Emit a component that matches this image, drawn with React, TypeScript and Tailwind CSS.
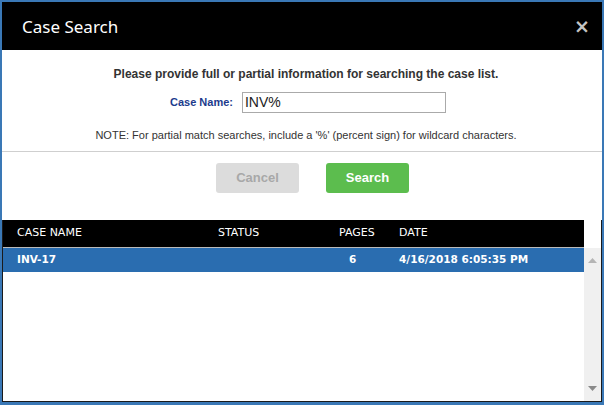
import React from "react";

const columns = [
  { label: "CASE NAME", w: "w-[201px]" },
  { label: "STATUS", w: "w-[121px]" },
  { label: "PAGES", w: "w-[60px]" },
  { label: "DATE", w: "flex-1" },
];

export default function App() {
  return (
    <div className="w-[604px] h-[405px] flex flex-col border-2 border-b-[3px] border-[#3a78b6] bg-white overflow-hidden">
      {/* Title bar */}
      <div className="h-[48px] shrink-0 bg-black flex items-center justify-between pl-[20px] pr-[12px]">
        <h1 className="text-white text-[17px] font-['Noto_Sans',sans-serif] leading-none">Case Search</h1>
        <span className="text-[#c4c4c4] text-[19px] font-bold leading-none font-['DejaVu_Sans',sans-serif]">×</span>
      </div>

      {/* Form */}
      <div className="flex flex-col items-center pt-[16px] pb-[9px] pl-[8px] border-b border-[#cfcfcf] font-['Liberation_Sans',Arial,sans-serif]">
        <p className="text-[12px] leading-[16px] font-bold text-[#333]">
          Please provide full or partial information for searching the case list.
        </p>
        <div className="flex items-center gap-[9px] mt-[10px] ml-[4px]">
          <label className="text-[11px] font-bold text-[#1c3b8c]">Case Name:</label>
          <input
            defaultValue="INV%"
            className="w-[204px] h-[21px] border border-[#aaa] px-[2px] text-[14px] text-[#222] outline-none"
          />
        </div>
        <p className="mt-[15px] text-[11px] leading-[14px] text-[#333]">
          NOTE: For partial match searches, include a '%' (percent sign) for wildcard characters.
        </p>
      </div>

      {/* Buttons */}
      <div className="flex justify-center gap-[27px] pt-[11px] pl-[21px] font-['Liberation_Sans',Arial,sans-serif]">
        <button className="w-[83px] h-[30px] rounded-[3px] bg-[#dcdcdc] text-[#a8a8a8] text-[13px] font-bold">
          Cancel
        </button>
        <button className="w-[83px] h-[30px] rounded-[3px] bg-[#5cbd4e] text-white text-[13px] font-bold">
          Search
        </button>
      </div>

      {/* Results table */}
      <div className="flex-1 mt-[27px] flex border-x border-b border-[#1a1a1a] font-['DejaVu_Sans',sans-serif] min-h-0">
        <div className="flex-1 flex flex-col">
          <div className="h-[28px] bg-black border-b border-[#bbb] flex items-center pl-[14px] text-white text-[11px]">
            {columns.map((c) => (
              <div key={c.label} className={c.w}>{c.label}</div>
            ))}
          </div>
          <div className="h-[24px] bg-[#2a6db0] flex items-center pl-[14px] text-white text-[10.5px] font-bold">
            <div className="w-[201px]">INV-17</div>
            <div className="w-[121px]"></div>
            <div className="w-[60px] pl-[10px]">6</div>
            <div className="flex-1">4/16/2018 6:05:35 PM</div>
          </div>
        </div>
        {/* Scrollbar */}
        <div className="w-[17px] flex flex-col">
          <div className="h-[28px] bg-white"></div>
          <div className="flex-1 bg-[#f0f0f0] flex flex-col items-center justify-between py-[10px]">
            <svg width="9" height="5" viewBox="0 0 9 5"><path d="M0 5 L4.5 0 L9 5 Z" fill="#b5b5b5" /></svg>
            <svg width="9" height="5" viewBox="0 0 9 5"><path d="M0 0 L4.5 5 L9 0 Z" fill="#8a8a8a" /></svg>
          </div>
        </div>
      </div>
    </div>
  );
}
